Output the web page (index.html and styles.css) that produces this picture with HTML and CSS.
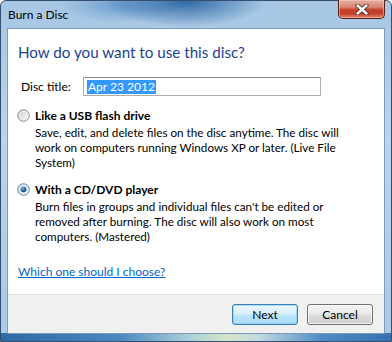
FILE: index.html
```html
<!DOCTYPE html>
<html>
<head>
<meta charset="utf-8">
<link rel="stylesheet" href="styles.css">
</head>
<body>
<div class="window">
  <div class="titlebar">
    <span class="title">Burn a Disc</span>
    <div class="close">
      <svg width="14" height="11" viewBox="0 0 14 11">
        <path d="M2.5 1.5 L11.5 9.5 M11.5 1.5 L2.5 9.5" stroke="#4a2a2a" stroke-width="4.2" stroke-linecap="round" fill="none"/>
        <path d="M2.5 1.5 L11.5 9.5 M11.5 1.5 L2.5 9.5" stroke="#ffffff" stroke-width="2.4" stroke-linecap="round" fill="none"/>
      </svg>
    </div>
  </div>
  <div class="client">
    <div class="main">
      <h1 class="instruction">How do you want to use this disc?</h1>
      <div class="field">
        <span class="field-label">Disc title:</span>
        <div class="textbox"><span class="sel">Apr 23 2012</span></div>
      </div>
      <div class="option">
        <div class="opt-head">
          <svg class="radio" width="13" height="13" viewBox="0 0 13 13">
            <defs>
              <linearGradient id="ru" x1="0" y1="0" x2="1" y2="1">
                <stop offset="0" stop-color="#cfcfcf"/>
                <stop offset="1" stop-color="#f7f7f7"/>
              </linearGradient>
            </defs>
            <circle cx="6.5" cy="6.5" r="5.8" fill="url(#ru)" stroke="#8e8f8f" stroke-width="1"/>
            <circle cx="6.5" cy="6.5" r="4.2" fill="none" stroke="#ffffff" stroke-opacity="0.5" stroke-width="0.8"/>
          </svg>
          <span class="opt-label">Like a USB flash drive</span>
        </div>
        <p class="opt-desc">Save, edit, and delete files on the disc anytime. The disc will<br>work on computers running Windows XP or later. (Live File<br>System)</p>
      </div>
      <div class="option">
        <div class="opt-head">
          <svg class="radio" width="13" height="13" viewBox="0 0 13 13">
            <defs>
              <linearGradient id="rc" x1="0" y1="0" x2="1" y2="1">
                <stop offset="0" stop-color="#c3d7e8"/>
                <stop offset="1" stop-color="#f4f8fb"/>
              </linearGradient>
              <radialGradient id="rd" cx="0.4" cy="0.35" r="0.7">
                <stop offset="0" stop-color="#8fc0e8"/>
                <stop offset="0.5" stop-color="#2a6aa8"/>
                <stop offset="1" stop-color="#123e6e"/>
              </radialGradient>
            </defs>
            <circle cx="6.5" cy="6.5" r="5.8" fill="url(#rc)" stroke="#6e8aa6" stroke-width="1"/>
            <circle cx="6.5" cy="6.5" r="2.8" fill="url(#rd)"/>
          </svg>
          <span class="opt-label">With a CD/DVD player</span>
        </div>
        <p class="opt-desc">Burn files in groups and individual files can't be edited or<br>removed after burning. The disc will also work on most<br>computers. (Mastered)</p>
      </div>
      <a class="help" href="#">Which one should I choose?</a>
    </div>
    <div class="footer">
      <button class="btn btn-default">Next</button>
      <button class="btn">Cancel</button>
    </div>
  </div>
</div>
</body>
</html>
```
FILE: styles.css
```css
html, body {
  margin: 0;
  padding: 0;
  background: #ffffff;
}

body {
  font-family: Lato, "Open Sans", sans-serif;
  font-size: 12px;
  color: #000;
}

.window {
  box-sizing: border-box;
  width: 392px;
  height: 342px;
  display: flex;
  flex-direction: column;
  border: 1px solid #34506e;
  border-radius: 6px 6px 0 0;
  background:
    linear-gradient(to right, #2f6aa6 0%, #4a86c2 30%, #a9cfd8 48%, #d6e4c4 58%, #c2dbe2 66%, #4e8bc6 82%, #3672b0 100%) left bottom / 100% 8px no-repeat,
    radial-gradient(ellipse 80px 26px at 185px 0px, rgba(38, 98, 160, 0.95), rgba(60, 120, 180, 0) 100%),
    radial-gradient(ellipse 60px 18px at 120px 4px, rgba(70, 130, 190, 0.6), rgba(70, 130, 190, 0) 100%),
    linear-gradient(to bottom, #a6c6e4 0%, #b9d4ec 40%, #a9c9e6 100%);
}

.titlebar {
  height: 27px;
  display: flex;
  justify-content: space-between;
  align-items: flex-start;
}

.title {
  margin: 6px 0 0 7px;
  font-size: 12px;
  line-height: 16px;
  color: #000;
}

.close {
  width: 47px;
  height: 19px;
  margin-right: 6px;
  margin-top: -1px;
  box-sizing: border-box;
  border: 1px solid #5a1f18;
  border-top: none;
  border-radius: 0 0 5px 5px;
  background: linear-gradient(to bottom, #e9b0a4 0%, #d98474 40%, #c33f2a 55%, #c2412c 75%, #e38466 100%);
  box-shadow: inset 0 0 0 1px rgba(255, 220, 210, 0.45);
  display: flex;
  align-items: center;
  justify-content: center;
}

.client {
  flex: 1;
  margin: 0 6px 7px 6px;
  border: 1px solid #7d9abb;
  display: flex;
  flex-direction: column;
  background: #ffffff;
}

.main {
  flex: 1;
  padding: 13px 0 0 10px;
  background: #ffffff;
}

.instruction {
  margin: 0;
  font-weight: normal;
  font-size: 15.2px;
  line-height: 20px;
  color: #1b3f94;
}

.field {
  display: flex;
  align-items: center;
  margin-top: 15px;
  height: 19px;
}

.field-label {
  width: 62px;
  margin-left: 3px;
}

.textbox {
  box-sizing: border-box;
  width: 238px;
  height: 19px;
  border: 1px solid #abadb3;
  border-top-color: #8e9196;
  padding: 1px 0 0 3px;
  line-height: 15px;
}

.sel {
  background: #3399ff;
  color: #ffffff;
  padding: 0 1px;
  display: inline-block;
  line-height: 14px;
}

.option {
  margin-top: 12px;
}

.opt-head {
  display: flex;
  align-items: center;
  height: 15px;
}

.radio {
  margin-left: -1px;
  margin-right: 5px;
  flex: none;
}

.opt-label {
  font-weight: bold;
  line-height: 15px;
}

.opt-desc {
  margin: 2px 0 0 17px;
  font-size: 11.7px;
  line-height: 15px;
}

.help {
  display: inline-block;
  margin-top: 20px;
  line-height: 15px;
  color: #0066cc;
  text-decoration: underline;
}

.footer {
  height: 39px;
  border-top: 1px solid #dfdfdf;
  background: #f0f0f0;
  display: flex;
  justify-content: flex-end;
  align-items: flex-start;
  gap: 9px;
  padding: 9px 11px 0 0;
  box-sizing: border-box;
}

.btn {
  width: 66px;
  height: 21px;
  padding: 0;
  font-family: Lato, "Open Sans", sans-serif;
  font-size: 12px;
  color: #000;
  border: 1px solid #707070;
  border-radius: 3px;
  background: linear-gradient(to bottom, #f2f2f2 0%, #ebebeb 48%, #dddddd 52%, #cfcfcf 100%);
  box-shadow: inset 0 0 0 1px rgba(255, 255, 255, 0.7);
}

.btn-default {
  border-color: #3c7fb1;
  background: linear-gradient(to bottom, #eaf6fd 0%, #d9f0fc 48%, #bee6fd 52%, #a7d9f5 100%);
  box-shadow: inset 0 0 0 1px rgba(120, 200, 240, 0.55);
}
```
